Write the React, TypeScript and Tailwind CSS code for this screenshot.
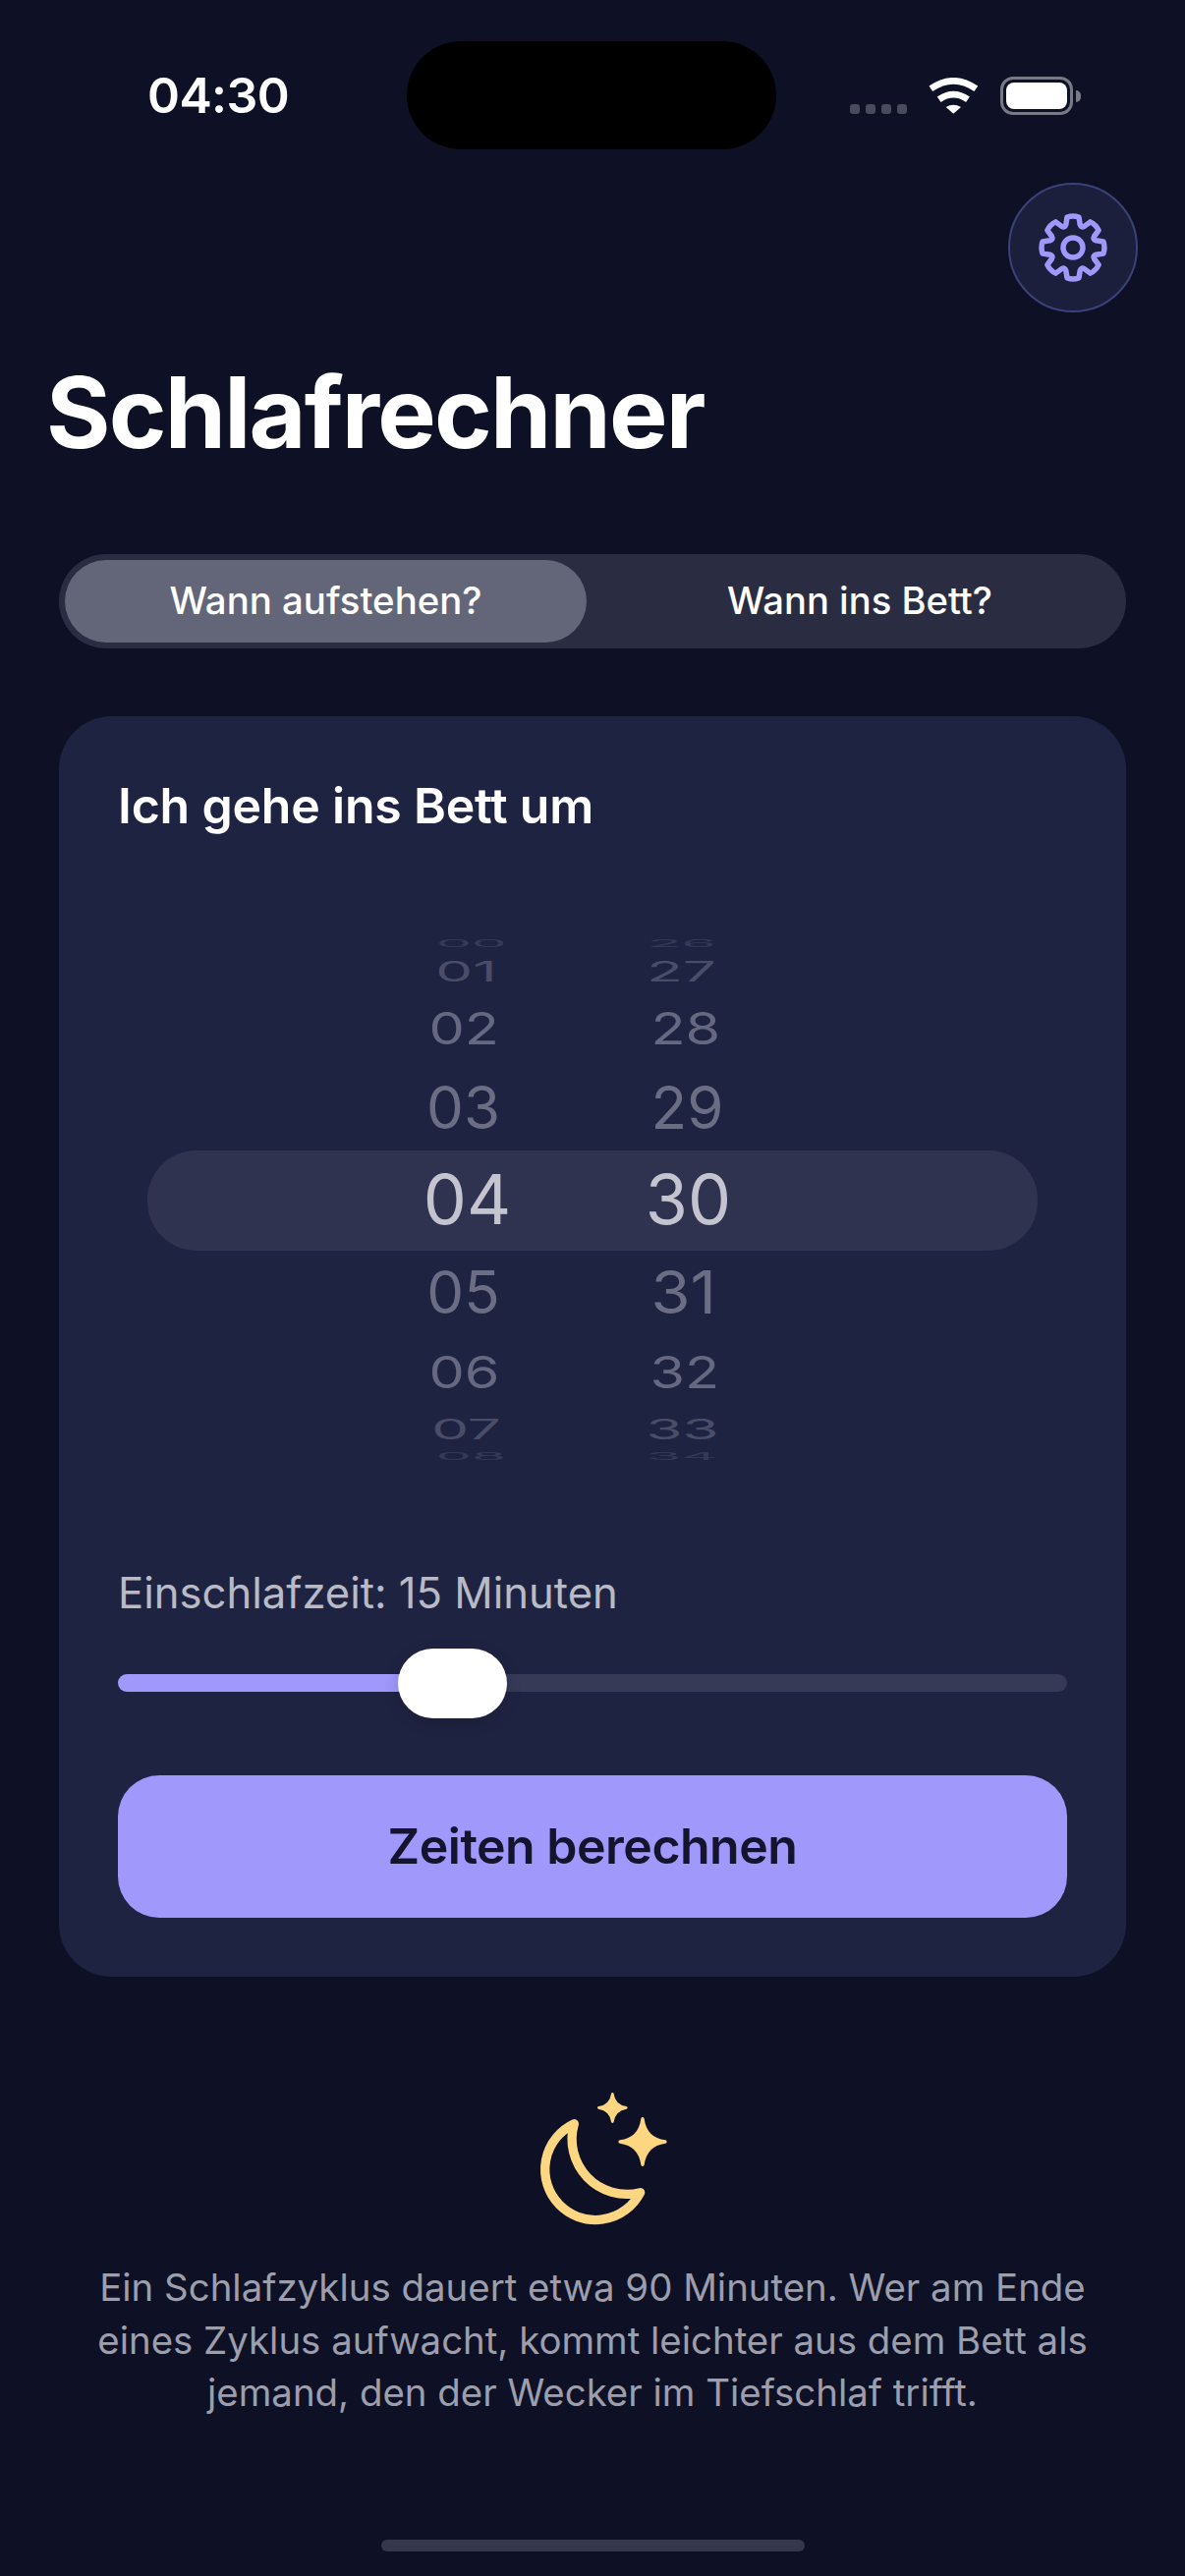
const hours = [
  { t: "00", row: "h-[8px] translate-x-[4px]", txt: "scale-x-[0.95] scale-y-[0.16] text-[#35385a]" },
  { t: "01", row: "h-[48px] translate-x-[-1px]", txt: "scale-y-[0.48] text-[#4a4d68]" },
  { t: "02", row: "h-[68px] translate-x-[-3px]", txt: "scale-x-[0.96] scale-y-[0.76] text-[#656880]" },
  { t: "03", row: "h-[94px] translate-x-[-4px]", txt: "text-[#6a6d84]" },
  { t: "04", row: "h-[94px]", txt: "text-[70px] text-[#c3c4d0]" },
  { t: "05", row: "h-[94px] translate-x-[-4px]", txt: "text-[#6a6d84]" },
  { t: "06", row: "h-[68px] translate-x-[-3px]", txt: "scale-x-[0.96] scale-y-[0.76] text-[#656880]" },
  { t: "07", row: "h-[48px] translate-x-[-1px]", txt: "scale-y-[0.48] text-[#4a4d68]" },
  { t: "08", row: "h-[8px] translate-x-[4px]", txt: "scale-x-[0.95] scale-y-[0.16] text-[#35385a]" },
];
const minutes = [
  { t: "26", row: "h-[8px] translate-x-[-7px]", txt: "scale-x-[0.95] scale-y-[0.16] text-[#35385a]" },
  { t: "27", row: "h-[48px] translate-x-[-7px]", txt: "scale-y-[0.48] text-[#4a4d68]" },
  { t: "28", row: "h-[68px] translate-x-[-3px]", txt: "scale-x-[0.96] scale-y-[0.76] text-[#656880]" },
  { t: "29", row: "h-[94px] translate-x-[-1px]", txt: "text-[#6a6d84]" },
  { t: "30", row: "h-[94px]", txt: "text-[70px] text-[#c3c4d0]" },
  { t: "31", row: "h-[94px] translate-x-[-5px]", txt: "scale-x-[1.08] text-[#6a6d84]" },
  { t: "32", row: "h-[68px] translate-x-[-4px]", txt: "scale-x-[0.96] scale-y-[0.76] text-[#656880]" },
  { t: "33", row: "h-[48px] translate-x-[-6px]", txt: "scale-y-[0.48] text-[#4a4d68]" },
  { t: "34", row: "h-[8px] translate-x-[-7px]", txt: "scale-x-[0.95] scale-y-[0.16] text-[#35385a]" },
];

function Wheel({ items }: { items: { t: string; row: string; txt: string }[] }) {
  return (
    <div className="flex w-[225px] flex-col">
      {items.map((i) => (
        <div key={i.t} className={`flex items-center justify-center ${i.row}`}>
          <span className={`text-[60px] leading-none ${i.txt}`}>{i.t}</span>
        </div>
      ))}
    </div>
  );
}

function gearPath() {
  const c = 40;
  const pt = (r: number, deg: number) => {
    const a = ((deg - 90) * Math.PI) / 180;
    return `${(c + r * Math.cos(a)).toFixed(2)} ${(c + r * Math.sin(a)).toFixed(2)}`;
  };
  let d = "";
  for (let i = 0; i < 8; i++) {
    const a = i * 45;
    d += `${i === 0 ? "M" : "L"}${pt(24.5, a - 17)}`;
    d += `L${pt(31.5, a - 11)}`;
    d += `Q${pt(33, a)} ${pt(31.5, a + 11)}`;
    d += `L${pt(24.5, a + 17)}`;
    d += `Q${pt(21.5, a + 22.5)} ${pt(24.5, a + 28)}`;
  }
  return d + "Z";
}

function Gear() {
  return (
    <svg width="80" height="80" viewBox="0 0 80 80" fill="none" stroke="#a098fa" strokeWidth="5.5" strokeLinejoin="round">
      <path d={gearPath()} />
      <circle cx="40" cy="40" r="10" />
    </svg>
  );
}

function Wifi() {
  return (
    <svg width="51" height="37" viewBox="0 0 153 111" fill="none">
      <path d="M7 34Q76 -14 145 34" stroke="white" strokeWidth="20" />
      <path d="M32 67Q76 36 120 67" stroke="white" strokeWidth="20" />
      <path d="M53 90Q76 76 99 90L76 110Z" fill="white" />
    </svg>
  );
}

function MoonStars() {
  return (
    <svg width="220" height="190" viewBox="0 0 660 570" fill="#fcd681">
      <path
        d="M250 185A154 154 0 1 0 452 395A168 168 0 0 1 250 185Z"
        fill="none"
        stroke="#fcd681"
        strokeWidth="28"
        strokeLinejoin="round"
      />
      <path
        d="M459 170Q467 232 528 240Q467 248 459 310Q451 248 390 240Q451 232 459 170Z"
        stroke="#fcd681"
        strokeWidth="10"
        strokeLinejoin="round"
      />
      <path
        d="M367 94Q372 130 409 136Q372 142 367 179Q362 142 325 136Q362 130 367 94Z"
        stroke="#fcd681"
        strokeWidth="8"
        strokeLinejoin="round"
      />
    </svg>
  );
}

export default function App() {
  return (
    <div className="flex h-[2622px] w-[1206px] flex-col overflow-hidden bg-[#0e1126] font-['Inter',sans-serif] text-white">
      <div className="flex h-[186px] items-start">
        <div className="w-[414px] pl-[150px] pt-[67px] text-[50px] font-semibold leading-[60px] tracking-[-0.6px]">04:30</div>
        <div className="mt-[42px] h-[110px] w-[376px] rounded-full bg-black" />
        <div className="flex items-start pl-[75px] pt-[78px]">
          <div className="mt-[28px] flex gap-[6px]">
            <div className="h-[10px] w-[10px] rounded-[3px] bg-[#494b5c]" />
            <div className="h-[10px] w-[10px] rounded-[3px] bg-[#494b5c]" />
            <div className="h-[10px] w-[10px] rounded-[3px] bg-[#494b5c]" />
            <div className="h-[10px] w-[10px] rounded-[3px] bg-[#494b5c]" />
          </div>
          <div className="ml-[22px] mt-[1px]">
            <Wifi />
          </div>
          <div className="ml-[22px] flex items-center">
            <div className="h-[39px] w-[74px] rounded-[13px] border-[3px] border-[#777985] p-[3px]">
              <div className="h-full w-full rounded-[8px] bg-white" />
            </div>
            <div className="ml-[3px] h-[12px] w-[5px] rounded-r-full bg-[#777985]" />
          </div>
        </div>
      </div>

      <div className="flex justify-end pr-[48px]">
        <div className="flex h-[132px] w-[132px] items-center justify-center rounded-full border-2 border-[#3b4278] bg-[#1b1f3b]">
          <Gear />
        </div>
      </div>

      <h1 className="mt-[42px] pl-[47px] text-[100px] font-bold leading-[120px] tracking-[-1.8px]">Schlafrechner</h1>

      <div className="mx-[60px] mt-[84px] flex h-[96px] items-center rounded-full bg-[#2a2d42] p-[6px]">
        <div className="flex h-[84px] w-[531px] items-center justify-center rounded-full bg-[#636578] text-[38.4px] font-medium">
          Wann aufstehen?
        </div>
        <div className="flex h-[84px] flex-1 items-center justify-center pl-[13px] text-[38.2px] font-medium">Wann ins Bett?</div>
      </div>

      <div className="mx-[60px] mt-[69px] flex h-[1283px] flex-col rounded-[54px] bg-[#1f2342] px-[60px]">
        <div className="mt-[60px] text-[50px] font-semibold leading-[62px] tracking-[-0.2px]">Ich gehe ins Bett um</div>

        <div className="relative mx-[30px] mt-[95px] flex h-[551px] justify-center pt-[10px]">
          <div className="absolute left-0 right-0 top-[225px] h-[102px] rounded-[50px] bg-[#2f334f]" />
          <div className="relative flex translate-x-[-15px]">
            <Wheel items={hours} />
            <Wheel items={minutes} />
          </div>
        </div>

        <div className="mt-[100px] text-[43.6px] leading-[50px] text-[#b9bac6]">Einschlafzeit: 15 Minuten</div>

        <div className="relative mt-[31px] flex h-[71px] items-center">
          <div className="mb-[2px] h-[18px] w-full overflow-hidden rounded-full bg-[#363a57]">
            <div className="h-full w-[330px] bg-[#a098fa]" />
          </div>
          <div className="absolute left-[285px] top-0 h-[71px] w-[111px] rounded-full bg-white shadow-[0_4px_16px_rgba(0,0,0,0.15)]" />
        </div>

        <div className="mt-[58px] flex h-[145px] items-center justify-center rounded-[42px] bg-[#a098fa] text-[50px] font-semibold tracking-[-0.5px] text-[#15142f]">
          Zeiten berechnen
        </div>
      </div>

      <div className="mt-[88px] flex justify-center pl-[16px]">
        <MoonStars />
      </div>
      <p className="mx-auto mt-[12px] w-[1100px] text-center text-[38.4px] leading-[53.5px] text-[#9d9eac]">
        Ein Schlafzyklus dauert etwa 90 Minuten. Wer am Ende
        <br />
        eines Zyklus aufwacht, kommt leichter aus dem Bett als
        <br />
        jemand, den der Wecker im Tiefschlaf trifft.
      </p>

      <div className="mx-auto mt-[122px] h-[12px] w-[431px] rounded-full bg-[#35384c]" />
    </div>
  );
}
